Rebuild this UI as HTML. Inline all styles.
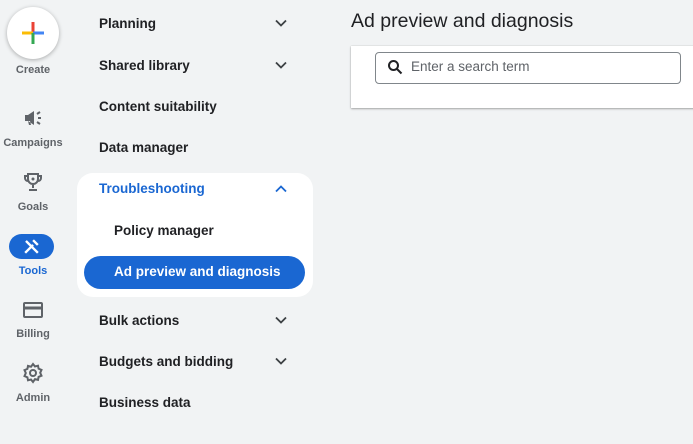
<!DOCTYPE html>
<html><head><meta charset="utf-8"><style>
*{margin:0;padding:0;box-sizing:border-box}
body{width:693px;height:444px;background:#f1f3f4;font-family:"Liberation Sans",Arial,sans-serif;position:relative;overflow:hidden;color:#202124}
.abs{position:absolute}
.rl{position:absolute;left:0;width:66px;text-align:center;font-size:11px;font-weight:bold;color:#5f6368}
.ic{position:absolute;left:21px;width:24px;height:24px}
.mi{position:absolute;left:99px;font-size:13.5px;font-weight:bold;color:#202124;line-height:16px}
.chev{position:absolute;left:274px;width:14px;height:14px}
</style></head><body>
<div class="abs" style="left:7px;top:7px;width:52px;height:52px;border-radius:50%;background:#fff;box-shadow:0 1px 4px rgba(0,0,0,.3)"></div>
<svg class="abs" style="left:21px;top:21px" width="24" height="24" viewBox="0 0 24 24">
<rect x="10.5" y="1" width="3" height="11" fill="#ea4335"/><rect x="1" y="10.5" width="11" height="3" fill="#fbbc04"/><rect x="12" y="10.5" width="11" height="3" fill="#4285f4"/><rect x="10.5" y="12" width="3" height="11" fill="#34a853"/></svg>
<div class="rl" style="top:64px">Create</div>

<svg class="ic" style="top:106px" viewBox="0 0 24 24" fill="#5f6368"><path d="M4 9h3l6-4v14l-6-4H4z M7 15l1 4h2l-1-4z"/><path d="M16 8l3-2M16 16l3 2M17 12h3" stroke="#5f6368" stroke-width="2" fill="none"/></svg>
<div class="rl" style="top:137px">Campaigns</div>

<svg class="ic" style="top:170px" viewBox="0 0 24 24" fill="none" stroke="#5f6368" stroke-width="2"><path d="M7 4h10v5a5 5 0 0 1-10 0z M7 6H4v2a3 3 0 0 0 3 3 M17 6h3v2a3 3 0 0 1-3 3 M12 14v4 M8 20h8"/><circle cx="12" cy="9" r="1.5" fill="#5f6368" stroke="none"/></svg>
<div class="rl" style="top:201px">Goals</div>

<div class="abs" style="left:9px;top:234px;width:45px;height:25px;border-radius:13px;background:#1a67d2"></div>
<svg class="abs" style="left:22px;top:237px" width="19" height="19" viewBox="0 0 24 24" fill="none" stroke="#fff" stroke-width="3"><path d="M4 20L14 10 M20 20L8 8 M5 5l4 4 M14 4l6 6"/></svg>
<div class="rl" style="top:265px;color:#1a67d2">Tools</div>

<svg class="ic" style="top:298px" viewBox="0 0 24 24" fill="none" stroke="#5f6368" stroke-width="2"><rect x="3" y="5" width="18" height="14" rx="1"/><path d="M3 10h18" stroke-width="3"/></svg>
<div class="rl" style="top:328px">Billing</div>

<svg class="ic" style="top:361px" viewBox="0 0 24 24" fill="none" stroke="#5f6368" stroke-width="2"><circle cx="12" cy="12" r="3"/><path d="M12 3l2 2.5 3-.8.6 3 2.9 1.2-1.3 2.9 1.3 2.9-2.9 1.2-.6 3-3-.8L12 21l-2-2.5-3 .8-.6-3-2.9-1.2L4.8 12 3.5 9.1l2.9-1.2.6-3 3 .8z"/></svg>
<div class="rl" style="top:392px">Admin</div>

<div class="mi" style="top:16px">Planning</div>
<div class="mi" style="top:58px">Shared library</div>
<div class="mi" style="top:99px">Content suitability</div>
<div class="mi" style="top:140px">Data manager</div>
<svg class="chev" style="top:16px" viewBox="0 0 14 14" fill="none" stroke="#3c4043" stroke-width="1.8"><path d="M2 4.5l5 5 5-5"/></svg>
<svg class="chev" style="top:58px" viewBox="0 0 14 14" fill="none" stroke="#3c4043" stroke-width="1.8"><path d="M2 4.5l5 5 5-5"/></svg>

<div class="abs" style="left:77px;top:173px;width:236px;height:124px;border-radius:16px;background:#fff"></div>
<div class="mi" style="top:181px;color:#1a67d2">Troubleshooting</div>
<svg class="chev" style="top:182px" viewBox="0 0 14 14" fill="none" stroke="#1a67d2" stroke-width="1.8"><path d="M2 9.5l5-5 5 5"/></svg>
<div class="mi" style="top:223px;left:114px">Policy manager</div>
<div class="abs" style="left:84px;top:256px;width:221px;height:33px;border-radius:17px;background:#1a67d2"></div>
<div class="mi" style="top:264px;left:114px;color:#fff">Ad preview and diagnosis</div>

<div class="mi" style="top:313px">Bulk actions</div>
<div class="mi" style="top:354px">Budgets and bidding</div>
<div class="mi" style="top:395px">Business data</div>
<svg class="chev" style="top:313px" viewBox="0 0 14 14" fill="none" stroke="#3c4043" stroke-width="1.8"><path d="M2 4.5l5 5 5-5"/></svg>
<svg class="chev" style="top:354px" viewBox="0 0 14 14" fill="none" stroke="#3c4043" stroke-width="1.8"><path d="M2 4.5l5 5 5-5"/></svg>

<div class="abs" style="left:351px;top:10px;font-size:19.5px;color:#202124">Ad preview and diagnosis</div>
<div class="abs" style="left:351px;top:46px;width:350px;height:62px;background:#fff;box-shadow:0 1px 2px rgba(0,0,0,.3),0 0 1px rgba(0,0,0,.2)"></div>
<div class="abs" style="left:375px;top:52px;width:306px;height:32px;border:1px solid #80868b;border-radius:4px;background:#fff"></div>
<svg class="abs" style="left:387px;top:59px" width="16" height="16" viewBox="0 0 16 16" fill="none" stroke="#202124" stroke-width="2"><circle cx="6.5" cy="6.5" r="4.5"/><path d="M10 10l4.5 4.5"/></svg>
<div class="abs" style="left:411px;top:59px;font-size:13.5px;color:#5f6368">Enter a search term</div>
</body></html>
